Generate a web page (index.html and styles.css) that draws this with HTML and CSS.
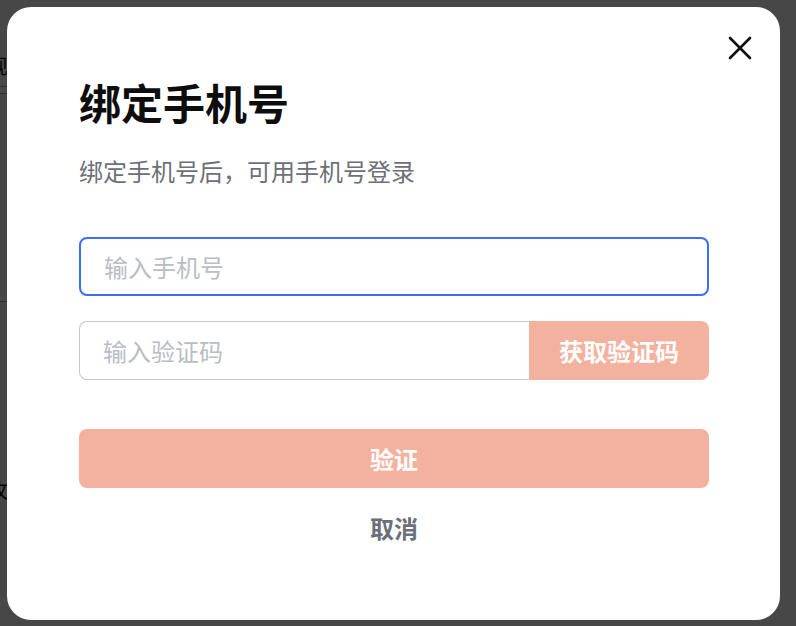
FILE: index.html
```html
<!DOCTYPE html>
<html lang="zh-CN">
<head>
<meta charset="utf-8">
<title>绑定手机号</title>
<link rel="stylesheet" href="styles.css">
</head>
<body>
<div class="page">
  <div class="page-row row-1">发现</div>
  <div class="page-rule rule-1"></div>
  <div class="page-rule rule-2"></div>
  <div class="page-rule rule-3"></div>
  <div class="page-row row-2">玫</div>
</div>
<div class="overlay">
  <div class="modal">
    <button class="close" aria-label="关闭">
      <svg width="24" height="24" viewBox="0 0 24 24"><path d="M2 2 L22 22 M22 2 L2 22" stroke="#111" stroke-width="2.6" stroke-linecap="round" fill="none"/></svg>
    </button>
    <h1 class="title">绑定手机号</h1>
    <p class="subtitle">绑定手机号后，可用手机号登录</p>
    <div class="field field-focus">
      <span class="placeholder">输入手机号</span>
    </div>
    <div class="code-row">
      <div class="field field-code">
        <span class="placeholder">输入验证码</span>
      </div>
      <button class="get-code">获取验证码</button>
    </div>
    <button class="submit">验证</button>
    <button class="cancel">取消</button>
  </div>
</div>
</body>
</html>
```

FILE: styles.css
```css
* { box-sizing: border-box; }
html, body {
  margin: 0;
  padding: 0;
  width: 796px;
  height: 626px;
  overflow: hidden;
  font-family: "Noto Sans CJK SC", "Noto Sans", sans-serif;
}
body { background: #ffffff; position: relative; }

.page {
  display: flex;
  flex-direction: column;
  color: #111;
  font-size: 20px;
}
.page-row { margin-left: -32px; line-height: 24px; }
.row-1 { margin-top: 54px; }
.page-rule { height: 1px; background: #b0b0b0; margin-left: 0; width: 40px; }
.rule-1 { margin-top: 8px; }
.rule-2 { margin-top: 6px; }
.rule-3 { margin-top: 207px; }
.row-2 { margin-top: 176px; margin-left: -12px; }

.overlay {
  position: absolute;
  inset: 0;
  background: rgba(0, 0, 0, 0.72);
  padding: 7px 16px 6px 7px;
}
.modal {
  position: relative;
  width: 773px;
  height: 613px;
  background: #fff;
  border-radius: 24px;
  padding: 70px 71px 0 72px;
  display: flex;
  flex-direction: column;
}
.close {
  position: absolute;
  top: 29px;
  right: 28px;
  width: 24px;
  height: 24px;
  padding: 0;
  border: 0;
  background: none;
  display: flex;
}
.title {
  margin: 0;
  font-size: 42px;
  line-height: 50px;
  font-weight: 700;
  color: #0d0d0d;
}
.subtitle {
  margin: 28px 0 0;
  font-size: 24px;
  line-height: 32px;
  color: #6c7077;
}
.field {
  height: 59px;
  border-radius: 8px;
  display: flex;
  align-items: center;
  padding-left: 23px;
}
.field-focus {
  margin-top: 50px;
  border: 2px solid #3b6ef3;
}
.placeholder {
  font-size: 24px;
  color: #b9bdc4;
}
.code-row {
  margin-top: 25px;
  display: flex;
  height: 59px;
}
.field-code {
  flex: 1;
  border: 1px solid #c4c7cd;
  border-right: 0;
  border-radius: 8px 0 0 8px;
  padding-left: 23px;
}
.get-code {
  width: 180px;
  border: 0;
  border-radius: 0 8px 8px 0;
  background: #f3b2a0;
  color: #fff;
  font-family: inherit;
  font-size: 24px;
  font-weight: 700;
}
.submit {
  margin-top: 49px;
  height: 59px;
  border: 0;
  border-radius: 8px;
  background: #f3b2a0;
  color: #fff;
  font-family: inherit;
  font-size: 24px;
  font-weight: 700;
}
.cancel {
  margin-top: 24px;
  align-self: center;
  border: 0;
  background: none;
  padding: 0;
  font-family: inherit;
  font-size: 24px;
  line-height: 32px;
  font-weight: 700;
  color: #6b6f76;
}
```
